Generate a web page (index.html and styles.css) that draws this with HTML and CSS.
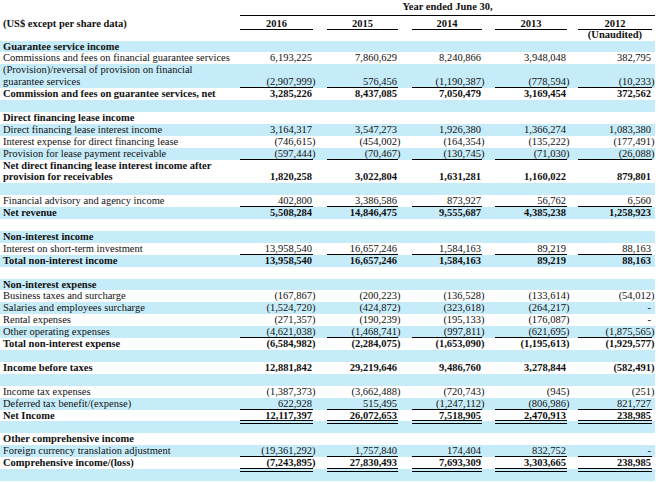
FILE: index.html
```html
<!DOCTYPE html>
<html>
<head>
<meta charset="utf-8">
<link rel="stylesheet" href="styles.css">
</head>
<body>
<table class="fin">
  <colgroup>
    <col class="c-lab"><col class="c-a"><col class="c-b"><col class="c-c"><col class="c-d"><col class="c-e">
  </colgroup>
  <thead>
    <tr class="h1"><td></td><td class="ye" colspan="5">Year ended June 30,</td></tr>
    <tr class="h2">
      <td class="lab b">(US$ except per share data)</td>
      <td class="yr">2016</td><td class="yr">2015</td><td class="yr">2014</td><td class="yr">2013</td><td class="yr">2012</td>
    </tr>
    <tr class="h3"><td></td><td></td><td></td><td></td><td></td><td class="yr">(Unaudited)</td></tr>
  </thead>
  <tbody>
    <tr class="hd"><td class="lab">Guarantee service income</td><td class="n"></td><td class="n"></td><td class="n"></td><td class="n"></td><td class="n"></td></tr>
    <tr><td class="lab">Commissions and fees on financial guarantee services</td><td class="n">6,193,225</td><td class="n">7,860,629</td><td class="n">8,240,866</td><td class="n">3,948,048</td><td class="n">382,795</td></tr>
    <tr class="ul"><td class="lab">(Provision)/reversal of provision on financial<br>guarantee services</td><td class="n m">(2,907,999)</td><td class="n">576,456</td><td class="n m">(1,190,387)</td><td class="n m">(778,594)</td><td class="n m">(10,233)</td></tr>
    <tr class="hd"><td class="lab">Commission and fees on guarantee services, net</td><td class="n">3,285,226</td><td class="n">8,437,085</td><td class="n">7,050,479</td><td class="n">3,169,454</td><td class="n">372,562</td></tr>
    <tr><td class="lab"></td><td class="n"></td><td class="n"></td><td class="n"></td><td class="n"></td><td class="n"></td></tr>
    <tr class="hd"><td class="lab">Direct financing lease income</td><td class="n"></td><td class="n"></td><td class="n"></td><td class="n"></td><td class="n"></td></tr>
    <tr><td class="lab">Direct financing lease interest income</td><td class="n">3,164,317</td><td class="n">3,547,273</td><td class="n">1,926,380</td><td class="n">1,366,274</td><td class="n">1,083,380</td></tr>
    <tr><td class="lab">Interest expense for direct financing lease</td><td class="n m">(746,615)</td><td class="n m">(454,002)</td><td class="n m">(164,354)</td><td class="n m">(135,222)</td><td class="n m">(177,491)</td></tr>
    <tr class="ul"><td class="lab">Provision for lease payment receivable</td><td class="n m">(597,444)</td><td class="n m">(70,467)</td><td class="n m">(130,745)</td><td class="n m">(71,030)</td><td class="n m">(26,088)</td></tr>
    <tr class="hd"><td class="lab">Net direct financing lease interest income after<br>provision for receivables</td><td class="n">1,820,258</td><td class="n">3,022,804</td><td class="n">1,631,281</td><td class="n">1,160,022</td><td class="n">879,801</td></tr>
    <tr><td class="lab"></td><td class="n"></td><td class="n"></td><td class="n"></td><td class="n"></td><td class="n"></td></tr>
    <tr class="ul"><td class="lab">Financial advisory and agency income</td><td class="n">402,800</td><td class="n">3,386,586</td><td class="n">873,927</td><td class="n">56,762</td><td class="n">6,560</td></tr>
    <tr class="hd"><td class="lab">Net revenue</td><td class="n">5,508,284</td><td class="n">14,846,475</td><td class="n">9,555,687</td><td class="n">4,385,238</td><td class="n">1,258,923</td></tr>
    <tr><td class="lab"></td><td class="n"></td><td class="n"></td><td class="n"></td><td class="n"></td><td class="n"></td></tr>
    <tr class="hd"><td class="lab">Non-interest income</td><td class="n"></td><td class="n"></td><td class="n"></td><td class="n"></td><td class="n"></td></tr>
    <tr class="ul"><td class="lab">Interest on short-term investment</td><td class="n">13,958,540</td><td class="n">16,657,246</td><td class="n">1,584,163</td><td class="n">89,219</td><td class="n">88,163</td></tr>
    <tr class="hd"><td class="lab">Total non-interest income</td><td class="n">13,958,540</td><td class="n">16,657,246</td><td class="n">1,584,163</td><td class="n">89,219</td><td class="n">88,163</td></tr>
    <tr><td class="lab"></td><td class="n"></td><td class="n"></td><td class="n"></td><td class="n"></td><td class="n"></td></tr>
    <tr class="hd"><td class="lab">Non-interest expense</td><td class="n"></td><td class="n"></td><td class="n"></td><td class="n"></td><td class="n"></td></tr>
    <tr><td class="lab">Business taxes and surcharge</td><td class="n m">(167,867)</td><td class="n m">(200,223)</td><td class="n m">(136,528)</td><td class="n m">(133,614)</td><td class="n m">(54,012)</td></tr>
    <tr><td class="lab">Salaries and employees surcharge</td><td class="n m">(1,524,720)</td><td class="n m">(424,872)</td><td class="n m">(323,618)</td><td class="n m">(264,217)</td><td class="n">-</td></tr>
    <tr><td class="lab">Rental expenses</td><td class="n m">(271,357)</td><td class="n m">(190,239)</td><td class="n m">(195,133)</td><td class="n m">(176,087)</td><td class="n">-</td></tr>
    <tr class="ul"><td class="lab">Other operating expenses</td><td class="n m">(4,621,038)</td><td class="n m">(1,468,741)</td><td class="n m">(997,811)</td><td class="n m">(621,695)</td><td class="n m">(1,875,565)</td></tr>
    <tr class="hd"><td class="lab">Total non-interest expense</td><td class="n m">(6,584,982)</td><td class="n m">(2,284,075)</td><td class="n m">(1,653,090)</td><td class="n m">(1,195,613)</td><td class="n m">(1,929,577)</td></tr>
    <tr><td class="lab"></td><td class="n"></td><td class="n"></td><td class="n"></td><td class="n"></td><td class="n"></td></tr>
    <tr class="hd"><td class="lab">Income before taxes</td><td class="n">12,881,842</td><td class="n">29,219,646</td><td class="n">9,486,760</td><td class="n">3,278,844</td><td class="n m">(582,491)</td></tr>
    <tr><td class="lab"></td><td class="n"></td><td class="n"></td><td class="n"></td><td class="n"></td><td class="n"></td></tr>
    <tr><td class="lab">Income tax expenses</td><td class="n m">(1,387,373)</td><td class="n m">(3,662,488)</td><td class="n m">(720,743)</td><td class="n m">(945)</td><td class="n m">(251)</td></tr>
    <tr class="ul"><td class="lab">Deferred tax benefit/(expense)</td><td class="n">622,928</td><td class="n">515,495</td><td class="n m">(1,247,112)</td><td class="n m">(806,986)</td><td class="n">821,727</td></tr>
    <tr class="hd dbl"><td class="lab">Net Income</td><td class="n">12,117,397</td><td class="n">26,072,653</td><td class="n">7,518,905</td><td class="n">2,470,913</td><td class="n">238,985</td></tr>
    <tr class="dbl2"><td class="lab"></td><td class="n"></td><td class="n"></td><td class="n"></td><td class="n"></td><td class="n"></td></tr>
    <tr class="hd"><td class="lab">Other comprehensive income</td><td class="n"></td><td class="n"></td><td class="n"></td><td class="n"></td><td class="n"></td></tr>
    <tr class="ul"><td class="lab">Foreign currency translation adjustment</td><td class="n m">(19,361,292)</td><td class="n">1,757,840</td><td class="n">174,404</td><td class="n">832,752</td><td class="n">-</td></tr>
    <tr class="hd dbl"><td class="lab">Comprehensive income/(loss)</td><td class="n m">(7,243,895)</td><td class="n">27,830,493</td><td class="n">7,693,309</td><td class="n">3,303,665</td><td class="n">238,985</td></tr>
    <tr class="dbl2"><td class="lab"></td><td class="n"></td><td class="n"></td><td class="n"></td><td class="n"></td><td class="n"></td></tr>
  </tbody>
</table>
</body>
</html>
```
FILE: styles.css
```css
html, body {
  margin: 0;
  padding: 0;
  background: #fff;
}
body {
  font-family: "Liberation Serif", "Times New Roman", serif;
  font-size: 10.5px;
  color: #111;
}
.fin {
  border-collapse: collapse;
  table-layout: fixed;
  width: 655px;
}
.c-lab { width: 240px; }
.c-a { width: 76px; }
.c-b { width: 85px; }
.c-c { width: 84px; }
.c-d { width: 85px; }
.c-e { width: 85px; }

.fin td {
  padding: 0;
  white-space: nowrap;
}
.fin td:nth-child(2) { --g: 0px; }
.fin td:nth-child(3) { --g: 11px; }
.fin td:nth-child(4) { --g: 11px; }
.fin td:nth-child(5) { --g: 10px; }
.fin td:nth-child(6) { --g: 8px; }

.b { font-weight: bold; }
.fin td.lab { padding-left: 3px; text-align: left; }

/* header */
.h1 td { height: 16px; line-height: 14px; vertical-align: top; }
.h1 .ye {
  font-weight: bold;
  text-align: center;
  background: linear-gradient(#000, #000) left bottom / 100% 1px no-repeat;
}
.h2 td { height: 14px; line-height: 13px; vertical-align: middle; }
.h3 td { height: 10.5px; line-height: 10.5px; vertical-align: middle; }
.fin td.yr {
  font-weight: bold;
  text-align: center;
  padding: 0 3px 0 var(--g);
}
.h2 td.yr {
  background: linear-gradient(#000, #000) no-repeat;
  background-position: var(--g) 100%;
  background-size: calc(100% - var(--g) - 3px) 1px;
}

/* body rows */
tbody td {
  height: 11.9px;
  line-height: 11.9px;
  vertical-align: bottom;
}
tbody tr:nth-child(odd) { background: #c6ecf9; }
tbody td.lab { vertical-align: top; }
tbody tr.hd td { font-weight: bold; }

.fin td.n {
  text-align: right;
  padding: 0 4px 0 var(--g);
}
.fin td.n.m { padding-right: 0.5px; }

tr.ul td.n,
tr.dbl td.n {
  background-image: linear-gradient(#000, #000);
  background-repeat: no-repeat;
  background-position: var(--g) 100%;
  background-size: calc(100% - var(--g) - 3px) 1px;
}
tr.dbl2 td.n {
  background-image: linear-gradient(#000, #000);
  background-repeat: no-repeat;
  background-position: var(--g) 2px;
  background-size: calc(100% - var(--g) - 3px) 1px;
}
```
